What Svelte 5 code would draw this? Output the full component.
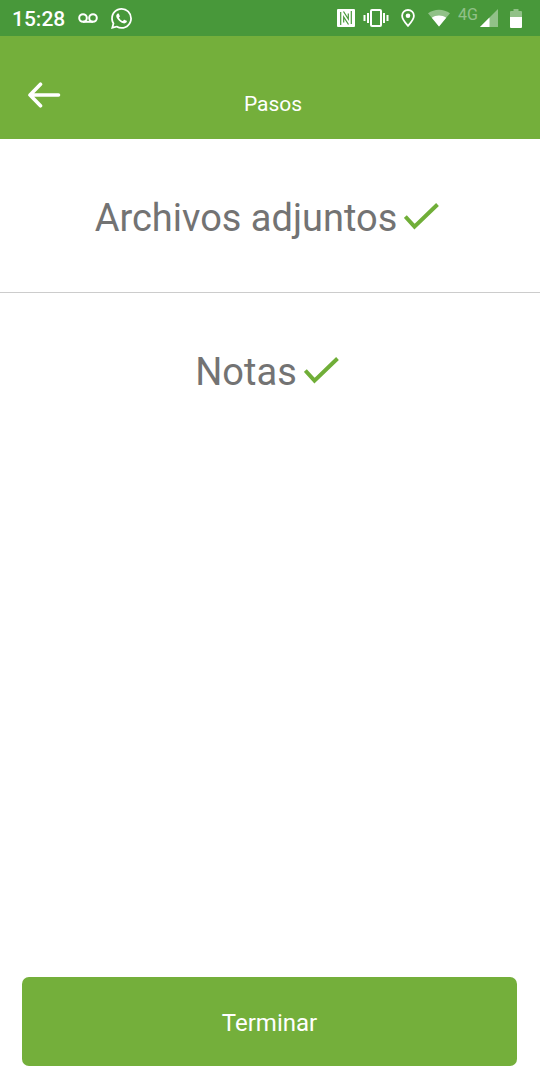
<script>
  const steps = ['Archivos adjuntos', 'Notas'];
</script>

<div class="screen">
  <div class="status">
    <div class="group left">
      <span class="time">15:28</span>
      <svg class="voicemail" width="20" height="10" viewBox="0 0 20 10" fill="none" stroke="#fff" stroke-width="2" aria-hidden="true">
        <circle cx="5" cy="5" r="3.8" /><circle cx="15" cy="5" r="3.8" /><path d="M5 8.8h10" />
      </svg>
      <svg class="whatsapp" width="21" height="21" viewBox="0 0 24 24" fill="#fff" aria-hidden="true">
        <path d="M17.472 14.382c-.297-.149-1.758-.867-2.03-.967-.273-.099-.471-.148-.67.15-.197.297-.767.966-.94 1.164-.173.199-.347.223-.644.075-.297-.15-1.255-.463-2.39-1.475-.883-.788-1.48-1.761-1.653-2.059-.173-.297-.018-.458.13-.606.134-.133.298-.347.446-.52.149-.174.198-.298.298-.497.099-.198.05-.371-.025-.52-.075-.149-.669-1.612-.916-2.207-.242-.579-.487-.5-.669-.51-.173-.008-.371-.01-.57-.01-.198 0-.52.074-.792.372-.272.297-1.04 1.016-1.04 2.479 0 1.462 1.065 2.875 1.213 3.074.149.198 2.096 3.2 5.077 4.487.709.306 1.262.489 1.694.625.712.227 1.36.195 1.871.118.571-.085 1.758-.719 2.006-1.413.248-.694.248-1.289.173-1.413-.074-.124-.272-.198-.57-.347m-5.421 7.403h-.004a9.87 9.87 0 01-5.031-1.378l-.361-.214-3.741.982.998-3.648-.235-.374a9.86 9.86 0 01-1.51-5.26c.001-5.45 4.436-9.884 9.888-9.884 2.64 0 5.122 1.03 6.988 2.898a9.825 9.825 0 012.893 6.994c-.003 5.45-4.437 9.884-9.885 9.884m8.413-18.297A11.815 11.815 0 0012.05 0C5.495 0 .16 5.335.157 11.892c0 2.096.547 4.142 1.588 5.945L.057 24l6.305-1.654a11.882 11.882 0 005.683 1.448h.005c6.554 0 11.89-5.335 11.893-11.893a11.821 11.821 0 00-3.48-8.413z" />
      </svg>
    </div>
    <div class="group right">
      <svg width="18" height="18" viewBox="0 0 18 18" aria-hidden="true">
        <rect width="18" height="18" rx="1" fill="#fff" />
        <path d="M3.700 3V16M6.500 2.500L11.300 10V4.500M14.300 15V2M11.500 15.500L6.700 8v5.500" fill="none" stroke="#48983a" stroke-width="1.200" />
      </svg>
      <svg class="vibrate" width="26" height="18" viewBox="0 0 26 18" fill="none" stroke="#fff" stroke-width="2" aria-hidden="true">
        <rect x="8" y="1" width="10" height="16" rx="1" />
        <path d="M5 4v10M1.500 6v6M21 4v10M24.500 6v6" />
      </svg>
      <svg class="pin" width="14" height="18" viewBox="0 0 14 18" aria-hidden="true">
        <path d="M7 1C3.700 1 1.100 3.500 1.100 6.800 1.100 10.600 7 16.800 7 16.800s5.900-6.200 5.900-10C12.900 3.500 10.300 1 7 1z" fill="none" stroke="#fff" stroke-width="1.800" />
        <circle cx="7" cy="6.700" r="2.300" fill="#fff" />
      </svg>
      <svg class="wifi" width="22" height="18" viewBox="0 0 22 18" aria-hidden="true">
        <path d="M0 4.200C6.300-.5 15.700-.5 22 4.200L11 17.500z" fill="#fff" opacity=".4" />
        <path d="M3.800 8.800c4.100-3.200 10.300-3.200 14.400 0L11 17.500z" fill="#fff" />
      </svg>
      <span class="network">4G</span>
      <svg class="signal" width="18" height="18" viewBox="0 0 18 18" aria-hidden="true">
        <path d="M18 0v18H0z" fill="#fff" opacity=".4" /><path d="M9.500 8.500V18H0z" fill="#fff" />
      </svg>
      <svg class="battery" width="12" height="19" viewBox="0 0 12 19" aria-hidden="true">
        <path d="M3.500 0h5v2H11q1 0 1 1v5H0V3q0-1 1-1h2.500z" fill="#fff" opacity=".4" />
        <path d="M0 8h12v10q0 1-1 1H1q-1 0-1-1z" fill="#fff" />
      </svg>
    </div>
  </div>

  <header>
    <button class="back" aria-label="Volver">
      <svg width="34" height="26" viewBox="0 0 34 26" fill="none" stroke="#fff" stroke-width="3.600" stroke-linecap="round" stroke-linejoin="round" aria-hidden="true">
        <path d="M13.500 2.200L3 13l10.500 10.800M3 13h28.500" />
      </svg>
    </button>
    <h1>Pasos</h1>
  </header>

  <main>
    {#each steps as step}
      <button class="step">
        <span>{step}</span>
        <svg width="35" height="28" viewBox="0 0 35 28" fill="none" stroke="#70ae38" stroke-width="4" aria-hidden="true">
          <path d="M1.300 14.500L10.500 24.700L33.500 2.500" />
        </svg>
      </button>
    {/each}
  </main>

  <footer><button class="finish">Terminar</button></footer>
</div>

<style>
  :global(body) { margin: 0; background: #fff; }
  .screen {
    min-height: 100vh;
    display: flex;
    flex-direction: column;
    font-family: Roboto, sans-serif;
    color: #fff;
  }
  button { font: inherit; border: 0; margin: 0; cursor: pointer; }
  svg { display: block; flex: none; }
  .status {
    display: flex;
    justify-content: space-between;
    align-items: center;
    height: 36px;
    padding: 0 18px 0 12px;
    background: #48983a;
  }
  .group { display: flex; align-items: center; }
  .left { gap: 13px; }
  .time { font-size: 21px; line-height: 24px; font-weight: 500; padding-top: 2px; }
  .right { gap: 8px; }
  .pin { margin: 0 5px 0 4px; }
  .network { font-size: 16px; line-height: 16px; opacity: .4; align-self: flex-start; margin-top: -2px; }
  .signal { margin-left: -6px; }
  .battery { margin-left: 4px; }
  header {
    display: grid;
    grid-template-columns: 88px 1fr 82px;
    align-items: center;
    height: 103px;
    background: #74af3b;
  }
  .back { justify-self: center; padding: 8px; background: none; margin-top: 14px; }
  h1 {
    grid-column: 2;
    margin: 32px 0 0;
    font-size: 21px;
    line-height: 24px;
    font-weight: 400;
    text-align: center;
  }
  main { flex: 1; }
  .step {
    display: flex;
    width: 100%;
    align-items: center;
    justify-content: center;
    gap: 7px;
    padding: 56px 6px 50px 0;
    background: none;
    color: #737373;
    font-size: 38px;
    line-height: 47px;
  }
  .step svg { margin-bottom: 5px; }
  .step + .step { border-top: 1px solid #ccc; }
  footer { padding: 14px 23px 14px 22px; }
  .finish {
    display: block;
    width: 100%;
    padding: 32px 16px 29px;
    border-radius: 7px;
    background: #74af3b;
    color: #fff;
    font-size: 24px;
    line-height: 28px;
  }
</style>
